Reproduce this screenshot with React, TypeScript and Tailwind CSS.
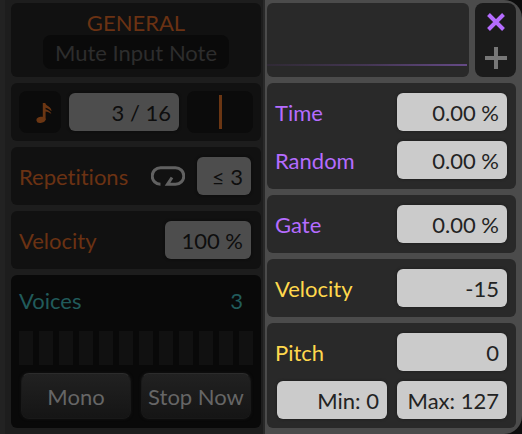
import { useState } from "react";
import type { ReactNode } from "react";
import clsx from "clsx";

interface ValueBoxProps {
  id: string;
  value: string;
  label?: string;
  dim?: boolean;
  className?: string;
}

function ValueBox({ id, value, label, dim, className }: ValueBoxProps) {
  const [text, setText] = useState(value);

  return (
    <input
      id={id}
      type="text"
      aria-label={label}
      value={text}
      onChange={(e) => setText(e.target.value)}
      className={clsx(
        "h-[38px] min-w-0 rounded-md pr-2 pl-1 text-right outline-none",
        dim
          ? "bg-[#4d4d4d] text-[#0e0e0e] shadow-[0_0_3px_#0a0a0a]"
          : "bg-[#cbcbcb] text-[#232323] shadow-[0_0_3px_#1c1c1c]",
        className
      )}
    />
  );
}

function Card({ dim, className, children }: { dim?: boolean; className?: string; children?: ReactNode }) {
  return (
    <div className={clsx("rounded-md", dim ? "bg-[#111111]" : "bg-[#292929]", className)}>{children}</div>
  );
}

interface ParamRowProps {
  id: string;
  label: string;
  value: string;
  color: string;
}

function ParamRow({ id, label, value, color }: ParamRowProps) {
  return (
    <div className="flex items-center justify-between">
      <label htmlFor={id} className={clsx("pt-0.5", color)}>
        {label}
      </label>
      <ValueBox id={id} value={value} className="w-[110px]" />
    </div>
  );
}

function NoteIcon() {
  return (
    <svg width="16" height="22" viewBox="0 0 16 22" fill="#6b3613" aria-hidden="true">
      <ellipse cx="5" cy="17.8" rx="4.6" ry="3" transform="rotate(-12 5 17.8)" />
      <path d="M6.800 1H9.200C10 3.200 12 3.800 13.600 5.200 15 6.500 15.600 7.800 15.400 9.300 13.800 7.300 11.500 6.300 9.600 5.800V7.200C12 8 14.800 9.200 15.400 12 13.500 10.200 11.500 9.600 9.600 9.400V18H6.800z" />
    </svg>
  );
}

function LoopIcon() {
  return (
    <svg width="34" height="20" viewBox="0 0 34 20" fill="none" stroke="#616161" strokeWidth="3" aria-hidden="true">
      <path d="M9.500 18.300A8.300 8.300 0 0 1 9.500 1.700H24.500A8.300 8.300 0 0 1 24.500 18.300H16.500L21 11.500" />
    </svg>
  );
}

const VOICE_SLOTS = Array.from({ length: 12 }, (_, i) => i);

const pushButton =
  "h-[46px] flex-1 rounded-lg border border-[#191919] border-t-[#2c2c2c] bg-linear-to-b from-[#212121] to-[#151515] pt-0.5 whitespace-nowrap text-[#666666] shadow-[0_0_3px_#161616]";

function GeneralPanel() {
  return (
    <section className="flex min-w-0 flex-col gap-1.5 border-r-2 border-l-[5px] border-r-[#292929] border-l-[#222222] bg-[#1d1d1d] pt-[3px] pr-0.5 pb-1.5 pl-1.5">
      <Card dim className="flex h-[74px] flex-col items-center pt-2">
        <h2 className="h-6 leading-6 text-[#6b3213]">GENERAL</h2>
        <button type="button" className="h-[34px] w-[186px] rounded-lg bg-[#0a0a0a] pt-0.5 text-[#2d2d2d]">
          Mute Input Note
        </button>
      </Card>

      <Card dim className="flex h-[58px] items-center gap-2 px-2">
        <button
          type="button"
          aria-label="Note length"
          className="flex size-[42px] items-center justify-center rounded-lg bg-[#0b0b0b] pt-0.5 pl-2"
        >
          <NoteIcon />
        </button>
        <ValueBox id="rate" label="Rate" value="3 / 16" dim className="w-[110px]" />
        <button
          type="button"
          aria-label="Offset"
          className="flex h-[42px] flex-1 items-center justify-center rounded-lg bg-[#0b0b0b]"
        >
          <span className="h-[34px] w-[3px] bg-[#6b3613]" />
        </button>
      </Card>

      <Card dim className="flex h-[58px] items-center pr-2.5 pl-2">
        <label htmlFor="repetitions" className="flex-1 pt-0.5 text-[#6b3213]">
          Repetitions
        </label>
        <button type="button" aria-label="Loop" className="mr-3">
          <LoopIcon />
        </button>
        <ValueBox id="repetitions" value="≤ 3" dim className="w-[54px]" />
      </Card>

      <Card dim className="flex h-[58px] items-center justify-between pr-2.5 pl-2">
        <label htmlFor="general-velocity" className="pt-0.5 text-[#6b3213]">
          Velocity
        </label>
        <ValueBox id="general-velocity" value="100 %" dim className="w-[86px]" />
      </Card>

      <div className="flex-1 rounded-md bg-[#090909] px-2 pt-3 pb-[9px]">
        <div className="flex h-7 justify-between pr-2.5 text-[#215b5b]">
          <span>Voices</span>
          <span>3</span>
        </div>
        <div className="mt-4 flex gap-1.5">
          {VOICE_SLOTS.map((slot) => (
            <span key={slot} className="h-[34px] flex-1 bg-[#111111]" />
          ))}
        </div>
        <div className="mt-2 flex gap-2.5 px-0.5">
          <button type="button" className={pushButton}>
            Mono
          </button>
          <button type="button" className={pushButton}>
            Stop Now
          </button>
        </div>
      </div>
    </section>
  );
}

function ModulationPanel() {
  return (
    <section className="flex min-w-0 flex-col gap-1.5 rounded-r-[18px] bg-[#4b4b4b] pt-[3px] pr-1.5 pb-1.5 pl-0.5">
      <div className="flex h-[74px] gap-1.5">
        <Card className="flex flex-1 flex-col justify-end pr-0.5 pb-[11px]">
          <div className="h-0.5 bg-linear-to-r from-[#302a35] via-[#443653] to-[#654a86]" />
        </Card>
        <div className="flex w-[41px] flex-col items-center rounded-lg bg-[#1b1b1b] pt-2">
          <button type="button" aria-label="Remove" className="flex h-[36px] w-full justify-center">
            <svg width="22" height="22" viewBox="0 0 22 22" stroke="#b56cff" strokeWidth="4" aria-hidden="true">
              <path d="M3.500 3.500l15 15M18.500 3.500L3.500 18.500" />
            </svg>
          </button>
          <button type="button" aria-label="Add" className="flex w-full justify-center">
            <svg width="22" height="22" viewBox="0 0 22 22" stroke="#777777" strokeWidth="4" aria-hidden="true">
              <path d="M11 0v22M0 11h22" />
            </svg>
          </button>
        </div>
      </div>

      <Card className="flex flex-col gap-2.5 py-2.5 pr-[9px] pl-2">
        <ParamRow id="time" label="Time" value="0.00 %" color="text-[#b56cff]" />
        <ParamRow id="random" label="Random" value="0.00 %" color="text-[#b56cff]" />
      </Card>

      <Card className="py-2.5 pr-[9px] pl-2">
        <ParamRow id="gate" label="Gate" value="0.00 %" color="text-[#b56cff]" />
      </Card>

      <Card className="py-2.5 pr-[9px] pl-2">
        <ParamRow id="velocity" label="Velocity" value="-15" color="text-[#ffd84d]" />
      </Card>

      <Card className="flex flex-1 flex-col gap-2.5 pt-2.5 pr-[9px] pb-[9px] pl-2">
        <ParamRow id="pitch" label="Pitch" value="0" color="text-[#ffd84d]" />
        <div className="grid grid-cols-2 gap-2.5 pl-0.5">
          <ValueBox id="pitch-min" label="Minimum pitch" value="Min: 0" className="w-full" />
          <ValueBox id="pitch-max" label="Maximum pitch" value="Max: 127" className="w-full" />
        </div>
      </Card>
    </section>
  );
}

export default function App() {
  return (
    <main className="grid grid-cols-[minmax(0,265fr)_minmax(0,257fr)] bg-[#0d0d0d] font-[Lato,sans-serif] text-[22px] leading-7 [font-variant-ligatures:none]">
      <GeneralPanel />
      <ModulationPanel />
    </main>
  );
}
